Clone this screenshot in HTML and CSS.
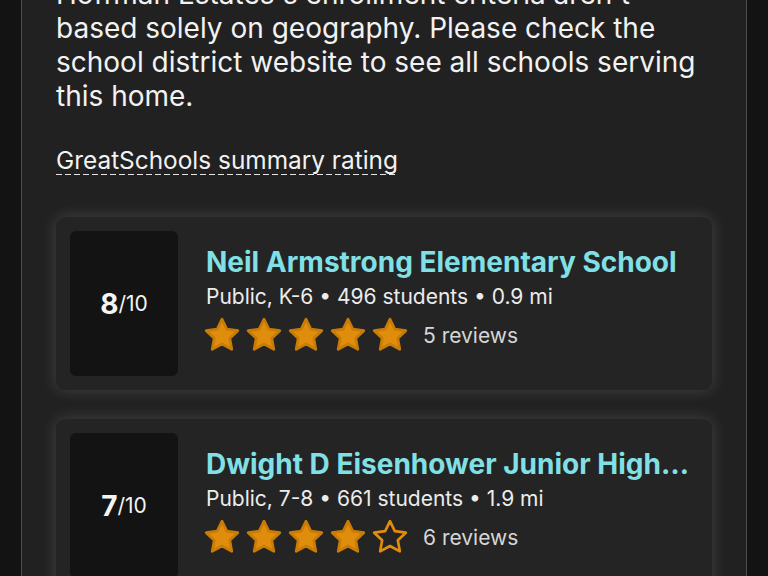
FILE: index.html
```html
<!DOCTYPE html>
<html lang="en">
<head>
<meta charset="utf-8">
<title>Schools</title>
<link rel="stylesheet" href="styles.css">
</head>
<body>
<div class="panel">
    <p class="note">Hoffman Estates's enrollment criteria aren't based solely on geography. Please check the school district website to see all schools serving this home.</p>
    <div class="summary"><span class="summary-link">GreatSchools summary rating</span></div>

    <div class="school">
        <div class="rating"><b>8</b>/10</div>
        <div class="info">
            <div class="name">Neil Armstrong Elementary School</div>
            <div class="meta">Public, K-6 &bull; 496 students &bull; 0.9 mi</div>
            <div class="stars">
                <svg viewBox="0 0 24 24"><polygon class="full" points="12,2.5 14.9,8.5 21.5,9.4 16.7,14 17.9,20.6 12,17.4 6.1,20.6 7.3,14 2.5,9.4 9.1,8.5"/></svg>
                <svg viewBox="0 0 24 24"><polygon class="full" points="12,2.5 14.9,8.5 21.5,9.4 16.7,14 17.9,20.6 12,17.4 6.1,20.6 7.3,14 2.5,9.4 9.1,8.5"/></svg>
                <svg viewBox="0 0 24 24"><polygon class="full" points="12,2.5 14.9,8.5 21.5,9.4 16.7,14 17.9,20.6 12,17.4 6.1,20.6 7.3,14 2.5,9.4 9.1,8.5"/></svg>
                <svg viewBox="0 0 24 24"><polygon class="full" points="12,2.5 14.9,8.5 21.5,9.4 16.7,14 17.9,20.6 12,17.4 6.1,20.6 7.3,14 2.5,9.4 9.1,8.5"/></svg>
                <svg viewBox="0 0 24 24"><polygon class="full" points="12,2.5 14.9,8.5 21.5,9.4 16.7,14 17.9,20.6 12,17.4 6.1,20.6 7.3,14 2.5,9.4 9.1,8.5"/></svg>
                <span class="reviews">5 reviews</span>
            </div>
        </div>
    </div>

    <div class="school">
        <div class="rating"><b>7</b>/10</div>
        <div class="info">
            <div class="name">Dwight D Eisenhower Junior High School</div>
            <div class="meta">Public, 7-8 &bull; 661 students &bull; 1.9 mi</div>
            <div class="stars">
                <svg viewBox="0 0 24 24"><polygon class="full" points="12,2.5 14.9,8.5 21.5,9.4 16.7,14 17.9,20.6 12,17.4 6.1,20.6 7.3,14 2.5,9.4 9.1,8.5"/></svg>
                <svg viewBox="0 0 24 24"><polygon class="full" points="12,2.5 14.9,8.5 21.5,9.4 16.7,14 17.9,20.6 12,17.4 6.1,20.6 7.3,14 2.5,9.4 9.1,8.5"/></svg>
                <svg viewBox="0 0 24 24"><polygon class="full" points="12,2.5 14.9,8.5 21.5,9.4 16.7,14 17.9,20.6 12,17.4 6.1,20.6 7.3,14 2.5,9.4 9.1,8.5"/></svg>
                <svg viewBox="0 0 24 24"><polygon class="full" points="12,2.5 14.9,8.5 21.5,9.4 16.7,14 17.9,20.6 12,17.4 6.1,20.6 7.3,14 2.5,9.4 9.1,8.5"/></svg>
                <svg viewBox="0 0 24 24"><polygon class="empty" points="12,2.5 14.9,8.5 21.5,9.4 16.7,14 17.9,20.6 12,17.4 6.1,20.6 7.3,14 2.5,9.4 9.1,8.5"/></svg>
                <span class="reviews">6 reviews</span>
            </div>
        </div>
    </div>
</div>
</body>
</html>
```

FILE: styles.css
```css
html, body {
    margin: 0;
    background: #131313;
    font-family: Inter, 'Noto Sans', sans-serif;
    color: #f2f2f2;
}
body {
    height: 576px;
    overflow: hidden;
}
.panel {
    width: 656px;
    height: 576px;
    overflow: hidden;
    margin-left: 21px;
    padding: 0 34px;
    background: #212121;
    border-left: 1px solid #4e4e4e;
    border-right: 1px solid #4e4e4e;
}
.note {
    margin: -23px 0 0;
    font-size: 28px;
    line-height: 34px;
}
.summary {
    margin-top: 30px;
    font-size: 24.4px;
    line-height: 34px;
}
.summary-link {
    background: repeating-linear-gradient(90deg, #e4e4e4 0 6px, transparent 6px 9px) left bottom / 100% 1px no-repeat;
}
.school {
    display: flex;
    gap: 28px;
    padding: 14px;
    margin-top: 40px;
    background: #242424;
    border-radius: 9px;
    box-shadow: 0 0 16px rgba(255, 255, 255, 0.16);
}
.school + .school {
    margin-top: 29px;
}
.rating {
    flex: none;
    width: 108px;
    height: 145px;
    display: flex;
    align-items: center;
    justify-content: center;
    background: #131313;
    border-radius: 6px;
    font-size: 21px;
    color: #f4f4f4;
}
.rating b {
    font-size: 28px;
    font-weight: 700;
}
.info {
    min-width: 0;
    flex: 1;
    padding-top: 15px;
    padding-right: 8px;
}
.name {
    font-size: 28px;
    font-weight: 700;
    line-height: 32px;
    color: #80e0e6;
    white-space: nowrap;
    overflow: hidden;
    text-overflow: ellipsis;
}
.meta {
    margin-top: 5px;
    font-size: 21px;
    line-height: 28px;
    color: #ececec;
}
.stars {
    display: flex;
    align-items: center;
    gap: 2px;
    margin-top: 4px;
    margin-left: -4px;
}
.stars svg {
    width: 40px;
    height: 40px;
}
.full {
    fill: #e08c0c;
    stroke: #c87c06;
    stroke-width: 1.6;
    stroke-linejoin: round;
}
.empty {
    fill: none;
    stroke: #e08c0c;
    stroke-width: 1.6;
    stroke-linejoin: round;
}
.reviews {
    margin-left: 11px;
    font-size: 21px;
    color: #d6d6d6;
}
```
